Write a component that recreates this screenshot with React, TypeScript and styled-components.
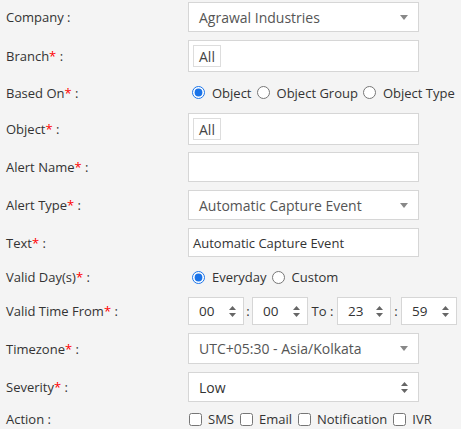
import React from "react";
import styled, { createGlobalStyle } from "styled-components";

const Global = createGlobalStyle`
  html, body { margin: 0; padding: 0; background: #f4f4f4; }
  body { font-family: "Open Sans", "Liberation Sans", sans-serif; color: #333; }
`;

const Form = styled.div`
  display: flex;
  flex-direction: column;
  gap: 8px;
  padding: 2px 0 0 6px;
  width: 455px;
`;

const Row = styled.div<{ $h: number }>`
  display: grid;
  grid-template-columns: 182px 1fr;
  align-items: center;
  height: ${(p) => p.$h}px;
`;

const Label = styled.div`
  font-size: 13px;
  color: #333;
  white-space: nowrap;
`;

const Star = styled.span`
  color: #f00;
`;

const Box = styled.div`
  box-sizing: border-box;
  width: 231px;
  height: 100%;
  background: #fff;
  border: 1px solid #d6d6d6;
  display: flex;
  align-items: center;
`;

const SelectBox = styled(Box)`
  justify-content: space-between;
  padding: 0 10px 0 10px;
  font-size: 14px;
  color: #555;
`;

const TextBox = styled(Box)`
  padding: 0 4px;
  font-size: 13px;
  color: #333;
`;

const TagBox = styled(Box)`
  align-items: flex-start;
  padding: 4px;
`;

const Tag = styled.span`
  box-sizing: border-box;
  height: 22px;
  padding: 0 5px;
  display: inline-flex;
  align-items: center;
  border: 1px solid #ddd;
  background: #fff;
  font-size: 14px;
  color: #444;
`;

const Inline = styled.div`
  display: flex;
  align-items: center;
  font-size: 13px;
  color: #333;
  height: 100%;
  white-space: nowrap;
`;

const Opt = styled.label`
  display: inline-flex;
  align-items: center;
  white-space: nowrap;
  margin-left: 4px;
  input {
    margin: 0 7px 0 0;
  }
  & + & {
    margin-left: 5px;
  }
`;

const Radio = styled.input.attrs({ type: "radio" })`
  width: 13px;
  height: 13px;
  accent-color: #1a73e8;
`;

const Check = styled.input.attrs({ type: "checkbox" })`
  width: 13px;
  height: 13px;
`;

const CheckOpt = styled(Opt)`
  margin-left: 1px;
  input {
    margin: 0 6px 0 0;
  }
  & + & {
    margin-left: 6px;
  }
`;

const TimeBox = styled(Box)<{ $w: number }>`
  width: ${(p) => p.$w}px;
  flex-shrink: 0;
  justify-content: space-between;
  padding: 0 7px 0 10px;
  font-size: 13.5px;
  color: #333;
`;

const Sep = styled.span<{ $w: number }>`
  width: ${(p) => p.$w}px;
  flex-shrink: 0;
  text-align: center;
  font-size: 13px;
  color: #333;
  white-space: nowrap;
`;

const Caret = () => (
  <svg width="8" height="5" viewBox="0 0 8 5">
    <path d="M0 0 L8 0 L4 5 Z" fill="#888" />
  </svg>
);

const UpDown = () => (
  <svg width="7" height="11" viewBox="0 0 7 11">
    <path d="M3.5 0 L7 4 L0 4 Z" fill="#666" />
    <path d="M0 7 L7 7 L3.5 11 Z" fill="#666" />
  </svg>
);

const L = ({ t, req }: { t: string; req?: boolean }) => (
  <Label>
    {t}
    {req && <Star>*</Star>} :
  </Label>
);

export default function App() {
  return (
    <>
      <Global />
      <Form>
        <Row $h={30}>
          <L t="Company" />
          <SelectBox>
            <span>Agrawal Industries</span>
            <Caret />
          </SelectBox>
        </Row>
        <Row $h={32}>
          <L t="Branch" req />
          <TagBox>
            <Tag>All</Tag>
          </TagBox>
        </Row>
        <Row $h={25}>
          <L t="Based On" req />
          <Inline>
            <Opt>
              <Radio name="based" defaultChecked />
              Object
            </Opt>
            <Opt>
              <Radio name="based" />
              Object Group
            </Opt>
            <Opt>
              <Radio name="based" />
              Object Type
            </Opt>
          </Inline>
        </Row>
        <Row $h={31}>
          <L t="Object" req />
          <TagBox>
            <Tag>All</Tag>
          </TagBox>
        </Row>
        <Row $h={30}>
          <L t="Alert Name" req />
          <TextBox />
        </Row>
        <Row $h={30}>
          <L t="Alert Type" req />
          <SelectBox>
            <span>Automatic Capture Event</span>
            <Caret />
          </SelectBox>
        </Row>
        <Row $h={29}>
          <L t="Text" req />
          <TextBox>Automatic Capture Event</TextBox>
        </Row>
        <Row $h={24}>
          <L t="Valid Day(s)" req />
          <Inline>
            <Opt>
              <Radio name="days" defaultChecked />
              Everyday
            </Opt>
            <Opt>
              <Radio name="days" />
              Custom
            </Opt>
          </Inline>
        </Row>
        <Row $h={28}>
          <L t="Valid Time From" req />
          <Inline>
            <TimeBox $w={56}>
              <span>00</span>
              <UpDown />
            </TimeBox>
            <Sep $w={8}>:</Sep>
            <TimeBox $w={56}>
              <span>00</span>
              <UpDown />
            </TimeBox>
            <Sep $w={29}>To :</Sep>
            <TimeBox $w={54}>
              <span>23</span>
              <UpDown />
            </TimeBox>
            <Sep $w={10}>:</Sep>
            <TimeBox $w={56}>
              <span>59</span>
              <UpDown />
            </TimeBox>
          </Inline>
        </Row>
        <Row $h={31}>
          <L t="Timezone" req />
          <SelectBox>
            <span>UTC+05:30 - Asia/Kolkata</span>
            <Caret />
          </SelectBox>
        </Row>
        <Row $h={30}>
          <L t="Severity" req />
          <SelectBox>
            <span style={{ color: "#333" }}>Low</span>
            <UpDown />
          </SelectBox>
        </Row>
        <Row $h={18}>
          <L t="Action" />
          <Inline>
            <CheckOpt>
              <Check />
              SMS
            </CheckOpt>
            <CheckOpt>
              <Check />
              Email
            </CheckOpt>
            <CheckOpt>
              <Check />
              Notification
            </CheckOpt>
            <CheckOpt>
              <Check />
              IVR
            </CheckOpt>
          </Inline>
        </Row>
      </Form>
    </>
  );
}
